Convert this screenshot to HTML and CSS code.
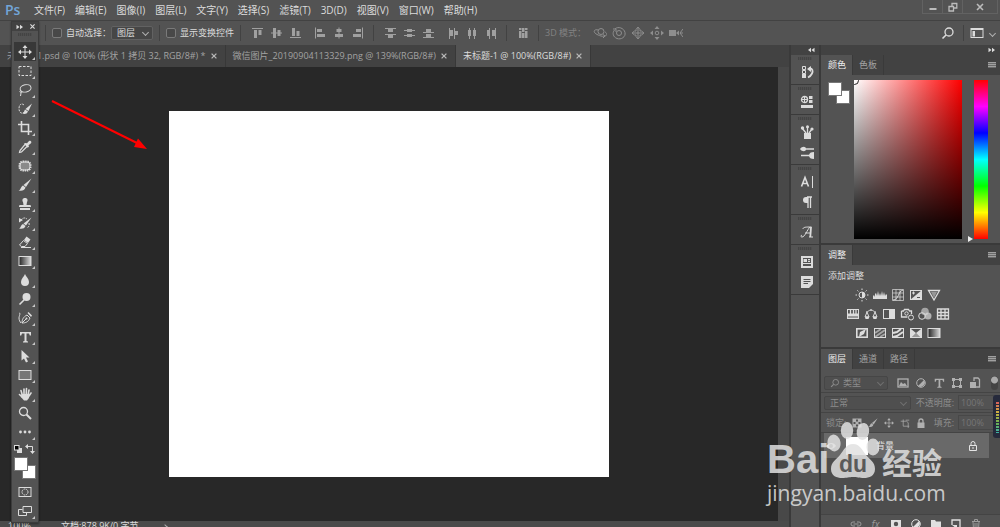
FILE: index.html
```
<!DOCTYPE html>
<html lang="zh-CN">
<head>
    <meta charset="UTF-8">
    <meta name="viewport" content="width=device-width, initial-scale=1.0">
    <title>Photoshop</title>
    <link rel="stylesheet" href="styles.css">
</head>
<body>
    <!-- Icon sprite -->
    <svg class="sprite" aria-hidden="true">
        <defs>
            <linearGradient id="g-grad"><stop offset="0" stop-color="#222"/><stop offset="1" stop-color="#ddd"/></linearGradient>
        </defs>
        <!-- tools -->
        <symbol id="i-move" viewBox="0 0 14 14"><path d="M7 2v10M2 7h10"/><path class="f" d="M7 0l2.500 3h-5zM7 14l2.500-3h-5zM0 7l3-2.500v5zM14 7l-3-2.500v5z"/></symbol>
        <symbol id="i-marquee" viewBox="0 0 14 14"><rect x="1" y="2.500" width="12" height="9" stroke-dasharray="2.500 1.500"/></symbol>
        <symbol id="i-lasso" viewBox="0 0 14 14"><ellipse cx="7.500" cy="5.500" rx="5.500" ry="3.600" transform="rotate(-12 7 5)"/><path d="M3 7.500c-2 1-1 2.500.5 2S4 8 3 8.500M3 10l-.5 3"/></symbol>
        <symbol id="i-quick" viewBox="0 0 14 14"><path d="M6 3C4 1 1 2 1 6.500s3 5.500 5 4" stroke-dasharray="2 1"/><path class="f" d="M14 1.500L10.500 9 7.500 7zM7 7.500l3 2c-1 2.500-3.500 3-5.500 2C6 11 6 9 7 7.500z"/></symbol>
        <symbol id="i-crop" viewBox="0 0 14 14"><path stroke-width="1.600" d="M3.500 0v10.500H14M0 3.500h10.500V14"/></symbol>
        <symbol id="i-dropper" viewBox="0 0 14 14"><path class="f" d="M7.500 3l1.500.3L11 1c2-1 3 1 2 2.300l-2.500 2 .5 1.200-1.200 1.200-4-4z"/><path stroke-width="1.200" d="M7 4.500l-5 6-.5 2 2-.5 5.500-5.500"/></symbol>
        <symbol id="i-patch" viewBox="0 0 14 14"><rect x="2" y="3" width="10" height="8" rx="3" style="fill:#8a8a8a"/><rect x="1.500" y="2.500" width="11" height="9" rx="3.500" stroke-width="2" stroke-dasharray="1.400 .8"/></symbol>
        <symbol id="i-brush" viewBox="0 0 14 14"><path class="f" d="M13.500.5L8 9 5.500 7zM5 7.500l2.500 2c-1 3.500-4 3.500-7 3C3 12 2.500 8.500 5 7.500z"/></symbol>
        <symbol id="i-stamp" viewBox="0 0 14 14"><path class="f" d="M7 1c2.800 0 3 2.500 2 4l-.5 3H12c1 0 1 1 1 2H1c0-1 0-2 1-2h3.500L5 5C4 3.500 4.200 1 7 1zM2 11h10v2H2z"/></symbol>
        <symbol id="i-history" viewBox="0 0 14 14"><path class="f" d="M13.500 1.500L8 9.500 5.500 7.500zM5 8l2.500 2c-1 3-4 3-6.500 2.500C3 12 2.500 9 5 8zM1 2l4 2-4 2.500z"/><path d="M3 4c2-2.500 4-2.500 6-1M11 7c.5 2 0 4-2 5" stroke-dasharray="2 1"/></symbol>
        <symbol id="i-eraser" viewBox="0 0 14 14"><path class="f" d="M8.500 1.500l4 3L10 8 6 5z"/><path d="M5.500 5.500l4 3-2.500 3H3.500L1.500 10zM3 12.500h10"/></symbol>
        <symbol id="i-gradient" viewBox="0 0 14 14"><rect x="1" y="2.500" width="12" height="9" style="fill:url(#g-grad)"/></symbol>
        <symbol id="i-blur" viewBox="0 0 14 14"><path class="f" d="M7 1c1 2.500 4 5 4 8a4 4 0 0 1-8 0c0-3 3-5.500 4-8z"/></symbol>
        <symbol id="i-dodge" viewBox="0 0 14 14"><circle class="f" cx="8.500" cy="5" r="4"/><path stroke-width="1.600" d="M6 8l-4.500 4.500"/></symbol>
        <symbol id="i-pen" viewBox="0 0 14 14"><path d="M4 12c0-3 1-6 5-8l3 3c-1.500 4-4.500 5-8 5zM4 12l4-4M1 2c2 0 0 3 0 5s1 4 2 5"/><path class="f" d="M9.500 2l1-1 3.500 3.500-1 1.500z"/><circle class="f" cx="8.500" cy="7.500" r="1"/></symbol>
        <symbol id="i-type" viewBox="0 0 14 14"><path class="f" d="M2 2h11v3.500h-1.200L11 3.500H8.500V11l1.500.6v1H5v-1l1.500-.6V3.500H4l-.8 2H2z"/></symbol>
        <symbol id="i-arrow" viewBox="0 0 14 14"><path class="f" d="M3.500 1l8 7.500H8l2 4-2 1-2-4-2.500 2z"/></symbol>
        <symbol id="i-rect" viewBox="0 0 14 14"><rect x="1" y="2.500" width="12" height="9" style="fill:#777"/></symbol>
        <symbol id="i-hand" viewBox="0 0 14 14"><path stroke-width="1.600" stroke-linecap="round" d="M4.300 8L3 3.500M6 7V2M8.200 7l.3-5.500M10 8l1-5M4 10L1.500 7.500M11 9l2-3"/><path class="f" d="M3.500 7h8l-.5 4-2 2.500H6L3 10z"/></symbol>
        <symbol id="i-zoom" viewBox="0 0 14 14"><circle cx="5.500" cy="5.500" r="4" stroke-width="1.300"/><path stroke-width="2" d="M8.500 8.500L13 13"/></symbol>
        <symbol id="i-dots" viewBox="0 0 14 14"><circle class="f" cx="2.500" cy="7" r="1.400"/><circle class="f" cx="7" cy="7" r="1.400"/><circle class="f" cx="11.500" cy="7" r="1.400"/></symbol>
        <symbol id="i-default" viewBox="0 0 10 10"><rect class="f" x="4" y="4" width="5" height="5"/><rect x="1.500" y="1.500" width="4.500" height="4.500" style="fill:#000"/></symbol>
        <symbol id="i-swap" viewBox="0 0 10 10"><path d="M2 2.500h5.500V8"/><path class="f" d="M0 2.500L3 0v5zM7.500 10L5 7h5z"/></symbol>
        <symbol id="i-mask" viewBox="0 0 14 14"><rect x="1" y="2.500" width="12" height="9"/><circle cx="7" cy="7" r="3" stroke-dasharray="1.500 .6"/></symbol>
        <symbol id="i-screen" viewBox="0 0 14 14"><path d="M4.500 5.500h-4v6h8V9M5 2.500h8.500v6H5z"/></symbol>
        <!-- options bar -->
        <symbol id="i-al-top" viewBox="0 0 14 14"><path d="M2 2.500h11"/><path class="f" d="M4 4h3v8H4zM8.500 4h3v5h-3z"/></symbol>
        <symbol id="i-al-mid" viewBox="0 0 14 14"><path d="M2 7h11"/><path class="f" d="M4 2h3v10H4zM8.500 4h3v6h-3z"/></symbol>
        <symbol id="i-al-bot" viewBox="0 0 14 14"><path d="M2 11.500h11"/><path class="f" d="M4 2h3v8H4zM8.500 5h3v5h-3z"/></symbol>
        <symbol id="i-al-left" viewBox="0 0 14 14"><path d="M2.500 1.500v11"/><path class="f" d="M4 3h5v3H4zM4 8h8v3H4z"/></symbol>
        <symbol id="i-al-cen" viewBox="0 0 14 14"><path d="M7 1.500v11"/><path class="f" d="M4.500 3h5v3h-5zM3 8h8v3H3z"/></symbol>
        <symbol id="i-al-right" viewBox="0 0 14 14"><path d="M11.500 1.500v11"/><path class="f" d="M5 3h5v3H5zM2 8h8v3H2z"/></symbol>
        <symbol id="i-ds-top" viewBox="0 0 14 14"><path d="M2 2.500h11M2 8.500h11"/><path class="f" d="M5 3h5v3H5zM5 9h5v3H5z"/></symbol>
        <symbol id="i-ds-mid" viewBox="0 0 14 14"><path d="M2 4.500h11M2 9.500h11"/><path class="f" d="M5 3h5v3H5zM5 8h5v3H5z"/></symbol>
        <symbol id="i-ds-bot" viewBox="0 0 14 14"><path d="M2 6.500h11M2 11.500h11"/><path class="f" d="M5 3h5v3H5zM5 8h5v3H5z"/></symbol>
        <symbol id="i-ds-left" viewBox="0 0 14 14"><path d="M3.500 2v11M8.500 2v11"/><path class="f" d="M4 4h3v6H4zM9 5h3v4H9z"/></symbol>
        <symbol id="i-ds-cen" viewBox="0 0 14 14"><path d="M4.500 2v11M9.500 2v11"/><path class="f" d="M3 4h3v6H3zM8 4h3v6H8z"/></symbol>
        <symbol id="i-ds-right" viewBox="0 0 14 14"><path d="M5.500 2v11M11.500 2v11"/><path class="f" d="M3 4h2v6H3zM8 4h3v6H8z"/></symbol>
        <symbol id="i-auto" viewBox="0 0 14 14"><path class="f" d="M3 2h2.500v2H3zM3 5h2.500v7H3zM6 2h2.500v4H6zM6 7h2.500v5H6zM9 2h2.500v2H9zM9 5h2.500v7H9z"/></symbol>
        <symbol id="i-3d-orbit" viewBox="0 0 14 14"><circle cx="8" cy="5.500" r="3"/><path d="M5 4C2 3 0 5 2 7s7 4 10 3 2-3 0-4M10 12l2-2-2-1.500"/></symbol>
        <symbol id="i-3d-roll" viewBox="0 0 14 14"><circle cx="7" cy="7" r="2.500"/><path d="M3 3c3-3 9-1 10 3.500S9 14 5 12.500 0 7 2.500 4M1 3h3v3"/></symbol>
        <symbol id="i-3d-pan" viewBox="0 0 14 14"><path d="M7 2v10M2 7h10M5 3.500L7 1l2 2.500V5h1.500L13 7l-2.500 2H9v1.500L7 13l-2-2.500V9H3.500L1 7l2.500-2H5z"/></symbol>
        <symbol id="i-3d-slide" viewBox="0 0 14 14"><circle cx="7" cy="7" r="1.800"/><path class="f" d="M7 0l2.500 3h-5zM7 14l2.500-3h-5zM0 7l3-2.500v5zM14 7l-3-2.500v5z"/></symbol>
        <symbol id="i-3d-cam" viewBox="0 0 14 14"><path class="f" d="M0 4h7v6H0zM7 7l3-2.500v5z"/><path d="M14 3l-3 4 3 4M11 7h3"/></symbol>
        <symbol id="i-search" viewBox="0 0 14 14"><circle cx="8" cy="6" r="4" stroke-width="1.300"/><path stroke-width="1.600" d="M5 9l-3.500 3.500"/></symbol>
        <symbol id="i-layout" viewBox="0 0 14 14"><rect x="1" y="2.500" width="12" height="9"/><path stroke-width="2" d="M1 3h12"/><path class="f" d="M2.500 5H5v5.500H2.500z"/></symbol>
        <symbol id="i-min" viewBox="0 0 10 10"><path stroke-width="2" d="M1.500 7h7"/></symbol>
        <symbol id="i-restore" viewBox="0 0 10 10"><path stroke-width="1.300" d="M1 4.500h4.500V9H1zM4 4V1.500h4.800V6H6"/></symbol>
        <symbol id="i-close" viewBox="0 0 10 10"><path stroke-width="1.600" d="M2 2l6 6M8 2L2 8"/></symbol>
        <symbol id="i-dbl-l" viewBox="0 0 8 6"><path class="f" d="M4 .8v4.400L1 3zM7.500.8v4.400l-3-2.200z"/></symbol>
        <symbol id="i-dbl-r" viewBox="0 0 8 6"><path class="f" d="M.5.8v4.400l3-2.200zM4 .8v4.400L7 3z"/></symbol>
        <!-- dock -->
        <symbol id="i-d-hist" viewBox="0 0 14 14"><path d="M2.500 1.500h3v3h-3zM2.500 5.500h3v3h-3z"/><path class="f" d="M2 9h4v4H2zM7 4l4-3v6z"/><path stroke-width="1.800" d="M9 3.500c4-.5 4 3 3 5s-2 3-4 4"/></symbol>
        <symbol id="i-d-lib" viewBox="0 0 14 14"><circle cx="4.500" cy="4.500" r="3" stroke-width="1.300"/><path d="M4.500 2v5M2 4.500h5"/><path class="f" d="M9 1h3.500v3H9zM9 5h3.500v3H9zM1 10h12v3H1z"/></symbol>
        <symbol id="i-d-cup" viewBox="0 0 14 14"><path class="f" d="M4 8h7v6H4z"/><path stroke-width="1.300" d="M6 8L2 3M7.500 8V1M9 8l3-4"/><circle class="f" cx="2.500" cy="3" r="1.700"/><circle class="f" cx="7.500" cy="1.800" r="1.500"/><circle class="f" cx="12" cy="4" r="1.600"/></symbol>
        <symbol id="i-d-brushes" viewBox="0 0 14 14"><path stroke-width="1.500" d="M5 4h9M1 10.500h9"/><path class="f" d="M0 4c2-3 6-3 6 0s-4 3-6 0zM14 7v7c-3 0-5-1-5-3.500S11 7 14 7z"/></symbol>
        <symbol id="i-d-char" viewBox="0 0 14 14"><path stroke-width="1.600" d="M1.500 11.500l3.500-9 3.500 9M3 8.500h4"/><path d="M12.500 1v12"/></symbol>
        <symbol id="i-d-para" viewBox="0 0 14 14"><path class="f" d="M8 2v6H6a3 3 0 0 1 0-6z"/><path stroke-width="1.300" d="M7 2h5M8 2v11M10.500 2v11"/></symbol>
        <symbol id="i-d-glyph" viewBox="0 0 14 14"><path d="M3 4c0-2 3-2 8.500-2M10 2C7 5 5 12 2 12c-1.500 0-1.500-2 0-1.500M5 8h6M9 12h4"/><path stroke-width="1.800" d="M11 2l-.7 10"/></symbol>
        <symbol id="i-d-info" viewBox="0 0 14 14"><rect x="2" y="2" width="10" height="10" stroke-width="2"/><path class="f" d="M3.500 4H7v3H3.500zM8 4h2v1.200H8zM8 6h2v1H8zM3 8h8v1H3z"/></symbol>
        <symbol id="i-d-note" viewBox="0 0 14 14"><path class="f" fill-rule="evenodd" d="M1 1h12v8l-4 4H1zM3.500 4v1h7V4zM3.500 6v1h7V6zM3.500 8v1H8V8z"/></symbol>
        <!-- adjustments -->
        <symbol id="i-a-sun" viewBox="0 0 14 14"><circle cx="7" cy="7" r="3"/><path class="f" d="M7 4a3 3 0 0 1 0 6z"/><path d="M7 .5V2M7 12v1.500M.5 7H2M12 7h1.500M2.400 2.400l1 1M10.600 10.600l1 1M2.400 11.600l1-1M10.600 3.400l1-1"/></symbol>
        <symbol id="i-a-levels" viewBox="0 0 14 14"><path class="f" d="M0 11V8l1-1 1 2V6l1-1 1 3 1-5 1 5 1-3 1 3 1-5 1 5 1-4 1 4 1-2 1 1v4z"/></symbol>
        <symbol id="i-a-curves" viewBox="0 0 14 14"><path opacity=".7" d="M1.500 1.500h11v11h-11zM5 1.500v11M9 1.500v11M1.500 5h11M1.500 9h11"/><path d="M2 12c6 0 5-9 10-10"/></symbol>
        <symbol id="i-a-expo" viewBox="0 0 14 14"><rect x="1.500" y="2.500" width="11" height="9"/><path class="f" d="M13 2v10H1z"/><path d="M3 5h3M4.500 3.500v3"/><path stroke="#535353" d="M8 9.500h3"/></symbol>
        <symbol id="i-a-vib" viewBox="0 0 14 14"><path stroke-width="1.300" d="M1.500 2.500h11L7 12z"/><path class="f" opacity=".5" d="M4 4h6L7 10z"/></symbol>
        <symbol id="i-a-hue" viewBox="0 0 14 14"><rect x="1.500" y="2.500" width="11" height="9"/><path class="f" d="M2 6.500h11V9H2z"/><path d="M4.500 3v4M7.500 3v4M10 3v4" stroke-width="1.300"/><path opacity=".5" stroke-width="2" d="M2 10h11"/></symbol>
        <symbol id="i-a-bal" viewBox="0 0 14 14"><path d="M7 2v2M2 5c2 0 3-2 5-2s3 2 5 2M3 5L1 10h4zM11 5l-2 5h4z"/><path class="f" d="M1 9.500h4.500L4.500 12h-3zM8.500 9.500H13L12.500 12h-3z"/></symbol>
        <symbol id="i-a-bw" viewBox="0 0 14 14"><rect x="1.500" y="2.500" width="11" height="9"/><path class="f" d="M7 2h6v10H7z"/></symbol>
        <symbol id="i-a-photo" viewBox="0 0 14 14"><path d="M1.500 4h2l1-1.500h4l1 1.500h2v3M1.500 4v6h6" stroke-width="1.300"/><circle cx="6.500" cy="6.500" r="1.700"/><circle cx="11" cy="10.500" r="2.500"/></symbol>
        <symbol id="i-a-mix" viewBox="0 0 14 14"><circle class="f" opacity=".6" cx="7" cy="4.500" r="3.800"/><circle cx="4" cy="9" r="3.300"/><circle class="f" opacity=".7" cx="10" cy="9" r="3.500"/></symbol>
        <symbol id="i-a-lut" viewBox="0 0 14 14"><path stroke-width="1.300" d="M1.500 2h11v10h-11zM5 2v10M9 2v10M1.500 5.500h11M1.500 8.500h11"/></symbol>
        <symbol id="i-a-inv" viewBox="0 0 14 14"><rect x="1.800" y="2.800" width="10.400" height="8.400" stroke-width="1.600"/><path class="f" d="M11 3L9 8l-5 3 1-5z"/></symbol>
        <symbol id="i-a-post" viewBox="0 0 14 14"><rect x="1.500" y="2.500" width="11" height="9"/><path opacity=".6" stroke-width="2" d="M2 7l6-4M2 11l10-7M7 11l5-3"/></symbol>
        <symbol id="i-a-thr" viewBox="0 0 14 14"><rect x="1.500" y="2.500" width="11" height="9"/><path stroke-width="2" d="M2 7l4-1 4-3M2 11l4-1 6-4"/></symbol>
        <symbol id="i-a-sel" viewBox="0 0 14 14"><rect x="1.500" y="2.500" width="11" height="9"/><path class="f" d="M2 3l5 4-5 5zM12 3L7 7l5 5z"/><path class="f" opacity=".5" d="M2 12l5-5 5 5z"/></symbol>
        <!-- layers -->
        <symbol id="i-l-img" viewBox="0 0 14 14"><rect x="2" y="3" width="10" height="8" stroke-width="1.300"/><path class="f" d="M3 10l2-4 2 2 2-1 2 3z"/></symbol>
        <symbol id="i-l-adj" viewBox="0 0 14 14"><circle cx="7" cy="7" r="4.300"/><path class="f" d="M10 4a4.300 4.300 0 0 1-6 6z"/></symbol>
        <symbol id="i-l-shape" viewBox="0 0 14 14"><path d="M3.500 3.500h7v7h-7z"/><path class="f" d="M2 2h3v3H2zM9 2h3v3H9zM2 9h3v3H2zM9 9h3v3H9z"/></symbol>
        <symbol id="i-l-smart" viewBox="0 0 14 14"><path stroke-width="1.300" d="M6 5V2h4l1.500 1.500V11H8"/><path class="f" d="M2 6h6v6H2z"/></symbol>
        <symbol id="i-l-checker" viewBox="0 0 14 14"><rect x="3" y="3" width="8" height="8"/><path class="f" d="M3 3h3v3H3zM8 3h3v3H8zM5.500 5.500h3v3h-3zM3 8h3v3H3zM8 8h3v3H8z"/></symbol>
        <symbol id="i-l-board" viewBox="0 0 14 14"><path d="M4.500 2v9.500H13M1 4.500h8l2.500 2V14M8 3h5"/></symbol>
        <symbol id="i-l-lock" viewBox="0 0 14 14"><path class="f" d="M3.500 6.500h7V12h-7z"/><path stroke-width="1.300" d="M5 7V5a2 2 0 0 1 4 0v2"/></symbol>
        <symbol id="i-l-lock2" viewBox="0 0 14 14"><path d="M3.500 6.500h7v5h-7zM5 6V4.500a2 2 0 0 1 4 0V6M7 8v2"/></symbol>
        <symbol id="i-l-eye" viewBox="0 0 14 14"><path class="f" fill-rule="evenodd" d="M2 7c3-4 8-4 10 0-3 4-8 4-10 0zm3 0a2 2 0 0 0 4 0 2 2 0 0 0-4 0z"/></symbol>
        <symbol id="i-l-link" viewBox="0 0 14 14"><path d="M6 5H4a2 2 0 0 0 0 4h2M8 5h2a2 2 0 0 1 0 4H8M4.500 7h5"/></symbol>
        <symbol id="i-l-mask" viewBox="0 0 14 14"><path class="f" fill-rule="evenodd" d="M2 3h10v8H2zM4.800 7a2.200 2.200 0 0 0 4.400 0 2.200 2.200 0 0 0-4.400 0z"/></symbol>
        <symbol id="i-l-folder" viewBox="0 0 14 14"><path class="f" d="M2 3h4l1 1.500h5V11H2z"/></symbol>
        <symbol id="i-l-new" viewBox="0 0 14 14"><path stroke-width="1.300" d="M3 8V3h8v8.500H8"/><path class="f" d="M3 8h5v4z"/></symbol>
        <symbol id="i-l-trash" viewBox="0 0 14 14"><path d="M3 4.500h8M5.500 4V2.500h3V4M4 5l.5 7h5l.5-7M6 6v5M8 6v5"/></symbol>
    </svg>

    <div class="app">
        <header class="menubar">
            <span class="logo">Ps</span>
            <nav class="menus">
                <button>文件(F)</button>
                <button>编辑(E)</button>
                <button>图像(I)</button>
                <button>图层(L)</button>
                <button>文字(Y)</button>
                <button>选择(S)</button>
                <button>滤镜(T)</button>
                <button>3D(D)</button>
                <button>视图(V)</button>
                <button>窗口(W)</button>
                <button>帮助(H)</button>
            </nav>
            <div class="window-buttons">
                <button aria-label="最小化"><svg class="icon-s"><use href="#i-min"/></svg></button>
                <button aria-label="还原"><svg class="icon-s"><use href="#i-restore"/></svg></button>
                <button class="wide" aria-label="关闭"><svg class="icon-s"><use href="#i-close"/></svg></button>
            </div>
        </header>

        <div class="options">
            <i class="sep"></i>
            <label class="check"><input type="checkbox">自动选择：</label>
            <span class="select"><select aria-label="自动选择"><option>图层</option></select></span>
            <i class="sep"></i>
            <label class="check"><input type="checkbox">显示变换控件</label>
            <i class="sep"></i>
            <div class="btn-group">
                <button aria-label="顶对齐"><svg class="icon"><use href="#i-al-top"/></svg></button>
                <button aria-label="垂直居中对齐"><svg class="icon"><use href="#i-al-mid"/></svg></button>
                <button aria-label="底对齐"><svg class="icon"><use href="#i-al-bot"/></svg></button>
            </div>
            <div class="btn-group next">
                <button aria-label="左对齐"><svg class="icon"><use href="#i-al-left"/></svg></button>
                <button aria-label="水平居中对齐"><svg class="icon"><use href="#i-al-cen"/></svg></button>
                <button aria-label="右对齐"><svg class="icon"><use href="#i-al-right"/></svg></button>
            </div>
            <i class="sep"></i>
            <div class="btn-group">
                <button aria-label="按顶分布"><svg class="icon"><use href="#i-ds-top"/></svg></button>
                <button aria-label="垂直居中分布"><svg class="icon"><use href="#i-ds-mid"/></svg></button>
                <button aria-label="按底分布"><svg class="icon"><use href="#i-ds-bot"/></svg></button>
            </div>
            <div class="btn-group next">
                <button aria-label="按左分布"><svg class="icon"><use href="#i-ds-left"/></svg></button>
                <button aria-label="水平居中分布"><svg class="icon"><use href="#i-ds-cen"/></svg></button>
                <button aria-label="按右分布"><svg class="icon"><use href="#i-ds-right"/></svg></button>
            </div>
            <i class="sep"></i>
            <div class="btn-group">
                <button aria-label="自动对齐图层"><svg class="icon"><use href="#i-auto"/></svg></button>
            </div>
            <i class="sep"></i>
            <span class="mode-label">3D 模式：</span>
            <div class="btn-group">
                <button aria-label="环绕"><svg class="icon"><use href="#i-3d-orbit"/></svg></button>
                <button aria-label="滚动"><svg class="icon"><use href="#i-3d-roll"/></svg></button>
                <button aria-label="平移"><svg class="icon"><use href="#i-3d-pan"/></svg></button>
                <button aria-label="滑动"><svg class="icon"><use href="#i-3d-slide"/></svg></button>
                <button aria-label="变焦"><svg class="icon"><use href="#i-3d-cam"/></svg></button>
            </div>
            <div class="options-end">
                <button aria-label="搜索"><svg class="icon"><use href="#i-search"/></svg></button>
                <i class="sep"></i>
                <button class="layout-btn" aria-label="工作区"><svg class="icon"><use href="#i-layout"/></svg></button>
            </div>
        </div>

        <div class="workspace">
            <main class="documents">
                <div class="doc-tabs">
                    <div class="doc-tab">未标题-1.psd @ 100% (形状 1 拷贝 32, RGB/8#) *<button aria-label="关闭"><svg class="icon-s"><use href="#i-close"/></svg></button></div>
                    <div class="doc-tab">微信图片_20190904113329.png @ 139%(RGB/8#)<button aria-label="关闭"><svg class="icon-s"><use href="#i-close"/></svg></button></div>
                    <div class="doc-tab active">未标题-1 @ 100%(RGB/8#)<button aria-label="关闭"><svg class="icon-s"><use href="#i-close"/></svg></button></div>
                </div>
                <div class="stage">
                    <div class="canvas-area">
                        <div class="artboard"></div>
                        <svg class="red-arrow" viewBox="0 0 98 52" aria-hidden="true">
                            <path d="M1 2L86 44"/>
                            <path class="head" d="M96 50l-13-2 4-8.500z"/>
                        </svg>
                    </div>
                    <div class="scrollbar"></div>
                </div>
                <footer class="status">
                    <span class="zoom-level">100%</span>
                    <span class="doc-size">文档:878.9K/0 字节</span>
                    <i class="chevron"></i>
                </footer>
            </main>

            <aside class="dock">
                <div class="dock-head"><svg class="dbl"><use href="#i-dbl-l"/></svg></div>
                <div class="dock-group">
                    <button aria-label="历史记录"><svg class="icon"><use href="#i-d-hist"/></svg></button>
                </div>
                <div class="dock-group">
                    <button aria-label="库"><svg class="icon"><use href="#i-d-lib"/></svg></button>
                </div>
                <div class="dock-group">
                    <button aria-label="画笔预设"><svg class="icon"><use href="#i-d-cup"/></svg></button>
                    <button aria-label="画笔"><svg class="icon"><use href="#i-d-brushes"/></svg></button>
                </div>
                <div class="dock-group">
                    <button aria-label="字符"><svg class="icon"><use href="#i-d-char"/></svg></button>
                    <button aria-label="段落"><svg class="icon"><use href="#i-d-para"/></svg></button>
                </div>
                <div class="dock-group">
                    <button aria-label="字形"><svg class="icon"><use href="#i-d-glyph"/></svg></button>
                </div>
                <div class="dock-group">
                    <button aria-label="信息"><svg class="icon"><use href="#i-d-info"/></svg></button>
                    <button aria-label="注释"><svg class="icon"><use href="#i-d-note"/></svg></button>
                </div>
                <div class="dock-rest"></div>
            </aside>

            <aside class="panels">
                <div class="dock-head right"><svg class="dbl"><use href="#i-dbl-r"/></svg></div>

                <section class="panel">
                    <div class="panel-tabs">
                        <button class="active">颜色</button>
                        <button>色板</button>
                        <i class="burger"></i>
                    </div>
                    <div class="color-body">
                        <div class="swatches"><i class="back"></i><i class="front"></i></div>
                        <div class="color-field"><i class="picker"></i></div>
                        <div class="hue"><i class="hue-arrow"></i></div>
                    </div>
                </section>

                <section class="panel">
                    <div class="panel-tabs">
                        <button class="active">调整</button>
                        <i class="burger"></i>
                    </div>
                    <div class="adjust-body">
                        <p>添加调整</p>
                        <div class="adjust-row">
                            <button aria-label="亮度/对比度"><svg class="icon"><use href="#i-a-sun"/></svg></button>
                            <button aria-label="色阶"><svg class="icon"><use href="#i-a-levels"/></svg></button>
                            <button aria-label="曲线"><svg class="icon"><use href="#i-a-curves"/></svg></button>
                            <button aria-label="曝光度"><svg class="icon"><use href="#i-a-expo"/></svg></button>
                            <button aria-label="自然饱和度"><svg class="icon"><use href="#i-a-vib"/></svg></button>
                        </div>
                        <div class="adjust-row">
                            <button aria-label="色相/饱和度"><svg class="icon"><use href="#i-a-hue"/></svg></button>
                            <button aria-label="色彩平衡"><svg class="icon"><use href="#i-a-bal"/></svg></button>
                            <button aria-label="黑白"><svg class="icon"><use href="#i-a-bw"/></svg></button>
                            <button aria-label="照片滤镜"><svg class="icon"><use href="#i-a-photo"/></svg></button>
                            <button aria-label="通道混合器"><svg class="icon"><use href="#i-a-mix"/></svg></button>
                            <button aria-label="颜色查找"><svg class="icon"><use href="#i-a-lut"/></svg></button>
                        </div>
                        <div class="adjust-row">
                            <button aria-label="反相"><svg class="icon"><use href="#i-a-inv"/></svg></button>
                            <button aria-label="色调分离"><svg class="icon"><use href="#i-a-post"/></svg></button>
                            <button aria-label="阈值"><svg class="icon"><use href="#i-a-thr"/></svg></button>
                            <button aria-label="可选颜色"><svg class="icon"><use href="#i-a-sel"/></svg></button>
                            <button aria-label="渐变映射"><svg class="icon"><use href="#i-gradient"/></svg></button>
                        </div>
                    </div>
                </section>

                <section class="panel layers">
                    <div class="panel-tabs">
                        <button class="active">图层</button>
                        <button>通道</button>
                        <button>路径</button>
                        <i class="burger"></i>
                    </div>
                    <div class="layer-row filter">
                        <span class="select kind"><svg class="icon-s"><use href="#i-search"/></svg><select aria-label="类型" disabled><option>类型</option></select></span>
                        <div class="filter-icons">
                            <button aria-label="像素图层"><svg class="icon"><use href="#i-l-img"/></svg></button>
                            <button aria-label="调整图层"><svg class="icon"><use href="#i-l-adj"/></svg></button>
                            <button aria-label="文字图层"><svg class="icon t"><use href="#i-type"/></svg></button>
                            <button aria-label="形状图层"><svg class="icon"><use href="#i-l-shape"/></svg></button>
                            <button aria-label="智能对象"><svg class="icon"><use href="#i-l-smart"/></svg></button>
                        </div>
                        <i class="toggle"></i>
                    </div>
                    <div class="layer-row">
                        <span class="select blend"><select aria-label="混合模式" disabled><option>正常</option></select></span>
                        <label class="percent">不透明度:<input type="text" value="100%" disabled></label>
                    </div>
                    <div class="layer-row">
                        <span class="lock-label">锁定:</span>
                        <div class="lock-icons">
                            <button aria-label="锁定透明像素"><svg class="icon"><use href="#i-l-checker"/></svg></button>
                            <button aria-label="锁定图像像素"><svg class="icon-s"><use href="#i-brush"/></svg></button>
                            <button aria-label="锁定位置"><svg class="icon-s"><use href="#i-move"/></svg></button>
                            <button aria-label="锁定画板"><svg class="icon-s"><use href="#i-l-board"/></svg></button>
                            <button aria-label="锁定全部"><svg class="icon"><use href="#i-l-lock"/></svg></button>
                        </div>
                        <label class="percent">填充:<input type="text" value="100%" disabled></label>
                    </div>
                    <div class="layer-list">
                        <div class="layer">
                            <svg class="icon"><use href="#i-l-eye"/></svg>
                            <i class="thumb"></i>
                            <span>背景</span>
                            <svg class="icon lock"><use href="#i-l-lock2"/></svg>
                        </div>
                    </div>
                    <div class="layer-foot">
                        <button class="off" aria-label="链接图层"><svg class="icon"><use href="#i-l-link"/></svg></button>
                        <button class="off fx">fx</button>
                        <button aria-label="添加蒙版"><svg class="icon"><use href="#i-l-mask"/></svg></button>
                        <button aria-label="新建调整图层"><svg class="icon"><use href="#i-l-adj"/></svg></button>
                        <button aria-label="新建组"><svg class="icon"><use href="#i-l-folder"/></svg></button>
                        <button aria-label="新建图层"><svg class="icon"><use href="#i-l-new"/></svg></button>
                        <button class="off" aria-label="删除图层"><svg class="icon"><use href="#i-l-trash"/></svg></button>
                    </div>
                </section>
            </aside>
        </div>

        <!-- Floating tool palette -->
        <div class="tools">
            <div class="tools-head"><svg class="dbl"><use href="#i-dbl-r"/></svg><svg class="x"><use href="#i-close"/></svg></div>
            <i class="grip"></i>
            <button class="tool active" aria-label="移动"><svg class="icon"><use href="#i-move"/></svg></button>
            <button class="tool" aria-label="矩形选框"><svg class="icon"><use href="#i-marquee"/></svg></button>
            <button class="tool" aria-label="套索"><svg class="icon"><use href="#i-lasso"/></svg></button>
            <button class="tool" aria-label="快速选择"><svg class="icon"><use href="#i-quick"/></svg></button>
            <button class="tool" aria-label="裁剪"><svg class="icon"><use href="#i-crop"/></svg></button>
            <button class="tool" aria-label="吸管"><svg class="icon"><use href="#i-dropper"/></svg></button>
            <button class="tool" aria-label="修补"><svg class="icon"><use href="#i-patch"/></svg></button>
            <button class="tool" aria-label="画笔"><svg class="icon"><use href="#i-brush"/></svg></button>
            <button class="tool" aria-label="仿制图章"><svg class="icon"><use href="#i-stamp"/></svg></button>
            <button class="tool" aria-label="历史记录画笔"><svg class="icon"><use href="#i-history"/></svg></button>
            <button class="tool" aria-label="橡皮擦"><svg class="icon"><use href="#i-eraser"/></svg></button>
            <button class="tool" aria-label="渐变"><svg class="icon"><use href="#i-gradient"/></svg></button>
            <button class="tool" aria-label="模糊"><svg class="icon"><use href="#i-blur"/></svg></button>
            <button class="tool" aria-label="减淡"><svg class="icon"><use href="#i-dodge"/></svg></button>
            <button class="tool" aria-label="钢笔"><svg class="icon"><use href="#i-pen"/></svg></button>
            <button class="tool" aria-label="文字"><svg class="icon"><use href="#i-type"/></svg></button>
            <button class="tool" aria-label="路径选择"><svg class="icon"><use href="#i-arrow"/></svg></button>
            <button class="tool" aria-label="矩形"><svg class="icon"><use href="#i-rect"/></svg></button>
            <button class="tool" aria-label="抓手"><svg class="icon"><use href="#i-hand"/></svg></button>
            <button class="tool single" aria-label="缩放"><svg class="icon"><use href="#i-zoom"/></svg></button>
            <button class="tool" aria-label="编辑工具栏"><svg class="icon"><use href="#i-dots"/></svg></button>
            <div class="mini">
                <svg class="icon-s"><use href="#i-default"/></svg>
                <svg class="icon-s"><use href="#i-swap"/></svg>
            </div>
            <div class="swatches"><i class="back"></i><i class="front"></i></div>
            <button class="tool single low" aria-label="快速蒙版"><svg class="icon"><use href="#i-mask"/></svg></button>
            <button class="tool" aria-label="屏幕模式"><svg class="icon"><use href="#i-screen"/></svg></button>
        </div>

        <!-- Desktop meter gadget at the screen edge -->
        <div class="meter"><i></i></div>

        <div class="watermark">
            <div class="brand">
                <span class="bai">Bai</span>
                <span class="paw">
                    <svg viewBox="0 0 52 58" aria-hidden="true">
                        <ellipse cx="7" cy="22" rx="6.500" ry="8.500" transform="rotate(-10 7 22)"/>
                        <ellipse cx="20" cy="9.500" rx="6.200" ry="8.500"/>
                        <ellipse cx="36" cy="10.500" rx="6.200" ry="8.500" transform="rotate(10 36 10)"/>
                        <ellipse cx="46" cy="26" rx="6.500" ry="8.500"/>
                        <path d="M26 23c7 0 9 6 13 11s9 7 9 14-6 9-11 9-7-1-11-1-6 1-11 1S4 55 4 48s5-9 9-14 6-11 13-11z"/>
                    </svg>
                    <b>du</b>
                </span>
                <span class="jingyan">经验</span>
            </div>
            <div class="url">jingyan.baidu.com</div>
        </div>
    </div>
</body>
</html>
```
FILE: styles.css
```
* {
    margin: 0;
    padding: 0;
    box-sizing: border-box;
}

body {
    background-color: #282828;
    color: #dcdcdc;
    font-family: "Open Sans", "Noto Sans CJK SC", sans-serif;
    font-size: 10px;
    line-height: 14px;
    overflow: hidden;
}

button,
select,
input {
    font: inherit;
    color: inherit;
    background: none;
    border: none;
    border-radius: 0;
}

i {
    display: block;
    flex: none;
}

svg {
    display: block;
    flex: none;
    fill: none;
    stroke: currentColor;
    stroke-width: 1;
}

.sprite {
    position: absolute;
    width: 0;
    height: 0;
}

.f {
    fill: currentColor;
    stroke: none;
}

.icon {
    width: 14px;
    height: 14px;
}

.icon-s {
    width: 10px;
    height: 10px;
}

.dbl {
    width: 8px;
    height: 6px;
}

/* the status bar and layer footer run off the bottom of the screen */
.app {
    position: relative;
    height: calc(100vh + 6px);
    display: flex;
    flex-direction: column;
    background-color: #535353;
}

/* Menu bar */
.menubar {
    height: 21px;
    display: flex;
    align-items: center;
    border-bottom: 1px solid #424242;
}

.logo {
    width: 34px;
    padding-left: 5px;
    color: #72a5d8;
    font-size: 14px;
    font-weight: 600;
}

.menus {
    display: flex;
    gap: 10px;
}

.window-buttons {
    display: flex;
    align-self: flex-start;
    margin-left: auto;
    margin-right: 2px;
    border: 1px solid #626262;
    border-top: none;
    color: #bcbcbc;
}

.window-buttons button {
    width: 20px;
    height: 13px;
    display: flex;
    align-items: center;
    justify-content: center;
    border-right: 1px solid #626262;
}

.window-buttons .wide {
    width: 34px;
    border-right: none;
}

/* Options bar */
.options {
    height: 24px;
    display: flex;
    align-items: center;
    padding-left: 39px;
    font-size: 9px;
    flex: none;
}

.sep {
    width: 1px;
    height: 16px;
    margin: 0 6px;
    background-color: #424242;
}

.check {
    display: flex;
    align-items: center;
    gap: 4px;
}

.check input {
    appearance: none;
    width: 10px;
    height: 10px;
    border: 1px solid #7a7a7a;
    border-radius: 2px;
    background-color: #484848;
}

.select {
    position: relative;
    display: flex;
    align-items: center;
    width: 42px;
    height: 14px;
    background-color: #464646;
    border: 1px solid #626262;
    border-radius: 2px;
}

.select select {
    appearance: none;
    flex: 1;
    min-width: 0;
    height: 12px;
    padding-left: 5px;
    line-height: 12px;
    opacity: 1;
}

.select::after,
.layout-btn::after,
.chevron {
    content: "";
    width: 4px;
    height: 4px;
    border: solid #b0b0b0;
    border-width: 0 1px 1px 0;
    transform: rotate(45deg);
}

.select::after {
    position: absolute;
    right: 4px;
    top: 3px;
}

.btn-group {
    display: flex;
    color: #a0a0a0;
}

.btn-group.next {
    margin-left: 6px;
}

.btn-group button {
    width: 19px;
    height: 19px;
    display: flex;
    align-items: center;
    justify-content: center;
}

.mode-label {
    color: #828282;
}

.mode-label + .btn-group {
    margin-left: 4px;
    color: #8e8e8e;
}

.options-end {
    display: flex;
    align-items: center;
    margin-left: auto;
    padding-right: 5px;
}

.options-end > button:first-child {
    margin-right: 2px;
}

.layout-btn {
    display: flex;
    align-items: center;
    gap: 6px;
}

/* Workspace */
.workspace {
    flex: 1;
    min-height: 0;
    display: grid;
    grid-template-columns: 1fr 28px 179px;
    column-gap: 2px;
    background-color: #3a3a3a;
}

.documents {
    min-width: 0;
    min-height: 0;
    display: flex;
    flex-direction: column;
}

.doc-tabs {
    height: 22px;
    display: flex;
    background-color: #424242;
    color: #a2a2a2;
    font-size: 9px;
    flex: none;
}

.doc-tab {
    display: flex;
    align-items: center;
    gap: 4px;
    padding: 0 7px;
    border-right: 1px solid #383838;
    white-space: nowrap;
}

.doc-tab button {
    color: #b8b8b8;
}

.doc-tab .icon-s {
    width: 8px;
    height: 8px;
}

.doc-tab.active {
    background-color: #535353;
    color: #dcdcdc;
}

.stage {
    flex: 1;
    min-height: 0;
    display: flex;
    background-color: #282828;
}

.canvas-area {
    position: relative;
    flex: 1;
    display: flex;
    align-items: center;
    justify-content: center;
}

.artboard {
    width: 440px;
    height: 366px;
    background-color: #fff;
}

.red-arrow {
    position: absolute;
    left: 51px;
    top: 32px;
    width: 98px;
    height: 52px;
    stroke: #f00;
    stroke-width: 2;
}

.red-arrow .head {
    fill: #f00;
    stroke: none;
}

.scrollbar {
    width: 11px;
    background-color: #484848;
}

.status {
    height: 12px;
    display: flex;
    align-items: flex-start;
    background-color: #4a4a4a;
    line-height: 10px;
    font-size: 9px;
    flex: none;
}

.zoom-level {
    width: 61px;
    padding-left: 8px;
}

.status .chevron {
    margin: 4px 0 0 24px;
    transform: rotate(-45deg);
}

/* Collapsed dock */
.dock,
.panels {
    display: flex;
    flex-direction: column;
    min-height: 0;
}

.dock-head {
    height: 10px;
    display: flex;
    align-items: center;
    justify-content: flex-end;
    padding-right: 4px;
    background-color: #424242;
    flex: none;
}

.dock-group {
    padding-bottom: 2px;
    border-bottom: 1px solid #3a3a3a;
    background-color: #535353;
}

.dock-group::before,
.grip {
    content: "";
    display: block;
    width: 14px;
    height: 3px;
    margin: 2px auto;
    background: repeating-linear-gradient(90deg, #444 0 1px, #4e4e4e 1px 2px);
}

.dock-group button {
    width: 100%;
    height: 20px;
    padding-left: 3px;
    display: flex;
    align-items: center;
    justify-content: center;
}

.dock-rest {
    flex: 1;
    background-color: #535353;
}

/* Panels */
.panel {
    background-color: #535353;
    margin-bottom: 2px;
    flex: none;
}

.panel-tabs {
    height: 20px;
    display: flex;
    align-items: center;
    padding-right: 4px;
    background-color: #424242;
    font-size: 9px;
}

.panel-tabs button {
    height: 20px;
    padding: 0 6px;
    color: #a2a2a2;
    border-right: 1px solid #3a3a3a;
}

.panel-tabs .active {
    padding-left: 7px;
    background-color: #535353;
    color: #eee;
}

.burger {
    width: 8px;
    height: 6px;
    margin-left: auto;
    background: repeating-linear-gradient(#a0a0a0 0 1px, #6a6a6a 1px 2px);
}

.color-body {
    display: flex;
    padding: 5px 12px 4px 7px;
}

.swatches {
    position: relative;
    width: 22px;
    height: 22px;
}

.swatches i {
    position: absolute;
    width: 14px;
    height: 14px;
    background-color: #fff;
    border: 1px solid #777;
}

.swatches .front {
    left: 0;
    top: 0;
}

.swatches .back {
    right: 0;
    bottom: 0;
}

.color-body .swatches {
    margin-top: 2px;
}

.color-field {
    position: relative;
    flex: 1;
    height: 159px;
    margin: 0 12px 0 4px;
    overflow: hidden;
    background: linear-gradient(to top, #000, transparent), linear-gradient(to right, #fff, #f00);
}

.picker {
    position: absolute;
    left: -4px;
    top: -4px;
    width: 9px;
    height: 9px;
    border: 1px solid #222;
    border-radius: 50%;
}

.hue {
    position: relative;
    width: 14px;
    height: 159px;
    background: linear-gradient(#f00, #f0f, #00f, #0ff, #0f0, #ff0, #f00);
}

.hue-arrow {
    position: absolute;
    left: -6px;
    bottom: -3px;
    border-left: 5px solid #eee;
    border-top: 3px solid transparent;
    border-bottom: 3px solid transparent;
}

.adjust-body {
    padding: 4px 32px 7px 7px;
    font-size: 9px;
}

.adjust-row {
    display: flex;
    justify-content: center;
    gap: 4px;
    padding-top: 5px;
}

.adjust-row button {
    height: 14px;
}

/* Layers */
.layers {
    flex: 1;
    min-height: 0;
    margin-bottom: 0;
    display: flex;
    flex-direction: column;
    color: #8c8c8c;
    font-size: 9px;
}

.layer-row {
    height: 20px;
    display: flex;
    align-items: center;
    padding-left: 3px;
    border-bottom: 1px solid #444;
    flex: none;
}

.layer-row.filter {
    height: 24px;
    padding-top: 4px;
    padding-right: 2px;
}

.layer-row .select {
    background-color: #4f4f4f;
    border-color: #464646;
}

.layer-row .select::after {
    border-color: #707070;
}

.kind {
    width: 64px;
    padding-left: 5px;
}

.kind select {
    padding-left: 3px;
}

.filter-icons,
.lock-icons {
    display: flex;
    gap: 4px;
    margin-left: 8px;
    color: #b0b0b0;
}

.filter-icons .t {
    padding: 1px;
}

.filter-icons button,
.lock-icons button {
    height: 14px;
    display: flex;
    align-items: center;
    justify-content: center;
}

.toggle {
    width: 7px;
    height: 14px;
    margin-left: auto;
    border-radius: 4px;
    background: radial-gradient(circle at 50% 4px, #aaa 3px, #444 4px);
}

.blend {
    width: 87px;
}

.percent {
    display: flex;
    align-items: center;
    gap: 4px;
    margin-left: auto;
}

.percent input {
    width: 42px;
    height: 15px;
    padding-left: 2px;
    border: 1px solid #484848;
    border-right: none;
    color: #767676;
}

.lock-label {
    margin-left: 2px;
}

.lock-icons {
    margin-left: 5px;
}

.lock-icons button {
    width: 12px;
}

.layer-list {
    flex: 1;
    padding: 0 11px 0 3px;
    background-color: #4d4d4d;
}

.layer {
    height: 25px;
    display: flex;
    align-items: center;
    background-color: #696969;
    color: #e4e4e4;
}

.thumb {
    width: 22px;
    height: 18px;
    margin: 0 8px;
    background-color: #fff;
}

.layer .lock {
    margin-left: auto;
    margin-right: 9px;
}

.layer-foot {
    height: 19px;
    display: flex;
    align-items: center;
    justify-content: center;
    gap: 6px;
    padding-right: 10px;
    padding-left: 20px;
    border-top: 1px solid #444;
    color: #e0e0e0;
    flex: none;
}

.layer-foot .off {
    color: #9a9a9a;
}

.fx {
    width: 14px;
    font-style: italic;
    font-size: 10px;
}

/* Tool palette */
.tools {
    position: absolute;
    left: 11px;
    top: 21px;
    width: 28px;
    padding-bottom: 2px;
    background-color: #535353;
    border: 1px solid #3c3c3c;
    box-shadow: 0 1px 2px rgba(0, 0, 0, 0.4);
}

.tools-head {
    height: 9px;
    display: flex;
    align-items: center;
    justify-content: space-between;
    padding: 0 2px 0 4px;
    background-color: #424242;
}

.tools-head .x {
    width: 7px;
    height: 7px;
}

.tools .grip {
    margin-bottom: 6px;
}

.tool {
    position: relative;
    width: 22px;
    height: 19px;
    margin: 0 auto;
    display: flex;
    align-items: center;
    justify-content: center;
}

.tool.active {
    background-color: #383838;
}

/* corner mark for tools with a flyout */
.tool::after {
    content: "";
    position: absolute;
    right: 1px;
    bottom: 1px;
    border-bottom: 3px solid #c8c8c8;
    border-left: 3px solid transparent;
}

.tool.single::after {
    display: none;
}

.mini {
    display: flex;
    justify-content: space-between;
    padding: 3px 3px 3px 1px;
}

.tools .swatches {
    margin: 0 auto;
}

.tool.low {
    margin-top: 3px;
}

/* Edge gadget */
.meter {
    position: absolute;
    right: 0;
    top: 395px;
    width: 7px;
    height: 43px;
    padding: 7px 1px 5px 3px;
    border-radius: 3px 0 0 3px;
    background-color: #262a3c;
}

.meter i {
    height: 100%;
    background: repeating-linear-gradient(transparent 0 2px, #262a3c 2px 3px), linear-gradient(#d85c5c, #d0b040, #6cb050, #3cb0a8);
}

/* Watermark */
.watermark {
    position: absolute;
    right: 54px;
    bottom: 26px;
    width: 179px;
    color: rgba(225, 225, 225, 0.85);
}

.brand {
    display: flex;
    align-items: flex-end;
    height: 60px;
    font-family: "Liberation Sans", "Noto Sans CJK SC", sans-serif;
    font-weight: bold;
}

.bai {
    width: 60px;
    font-size: 40px;
    line-height: 40px;
}

.paw {
    position: relative;
    width: 52px;
    height: 58px;
}

.paw svg {
    width: 52px;
    height: 58px;
    fill: currentColor;
    stroke: none;
}

.paw b {
    position: absolute;
    left: 0;
    right: 0;
    bottom: 3px;
    color: #5a5a5a;
    font-size: 23px;
    line-height: 23px;
    text-align: center;
}

.jingyan {
    margin-left: 3px;
    font-size: 30px;
    line-height: 30px;
    white-space: nowrap;
}

.url {
    font-size: 21px;
    line-height: 28px;
}
```
